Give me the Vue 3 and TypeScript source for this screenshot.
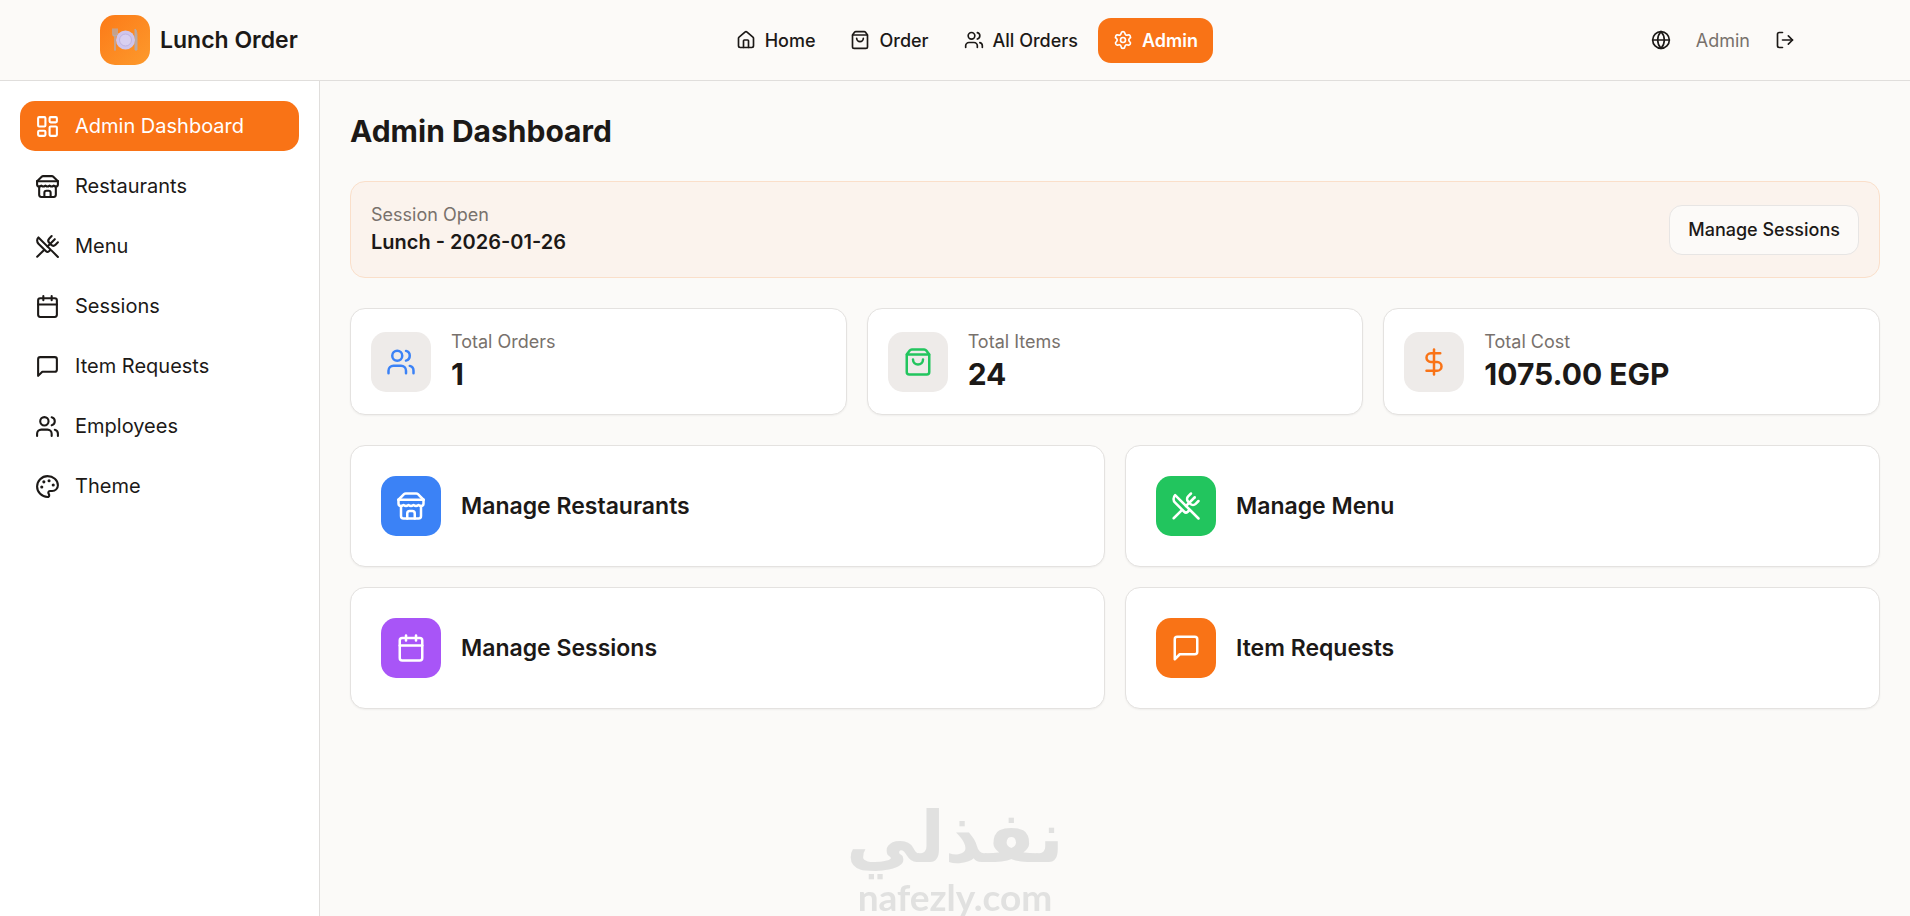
<script setup lang="ts">
import { h, type FunctionalComponent } from 'vue'

type IconName =
  | 'home' | 'bag' | 'users' | 'settings' | 'globe' | 'logout' | 'dashboard'
  | 'store' | 'utensils' | 'calendar' | 'message' | 'palette' | 'dollar'

const icons: Record<IconName, string[]> = {
  home: [
    'M15 21v-8a1 1 0 0 0-1-1h-4a1 1 0 0 0-1 1v8',
    'M3 10a2 2 0 0 1 .709-1.528l7-5.999a2 2 0 0 1 2.582 0l7 5.999A2 2 0 0 1 21 10v9a2 2 0 0 1-2 2H5a2 2 0 0 1-2-2z',
  ],
  bag: [
    'M16 10a4 4 0 0 1-8 0',
    'M3.103 6.034h17.794',
    'M3.4 5.467a2 2 0 0 0-.4 1.2V20a2 2 0 0 0 2 2h14a2 2 0 0 0 2-2V6.667a2 2 0 0 0-.4-1.2l-2-2.667A2 2 0 0 0 17 2H7a2 2 0 0 0-1.6.8z',
  ],
  users: [
    'M16 21v-2a4 4 0 0 0-4-4H6a4 4 0 0 0-4 4v2',
    'M16 3.128a4 4 0 0 1 0 7.744',
    'M22 21v-2a4 4 0 0 0-3-3.87',
    'M5 7a4 4 0 1 0 8 0a4 4 0 1 0-8 0',
  ],
  settings: [
    'M9.671 4.136a2.34 2.34 0 0 1 4.659 0 2.34 2.34 0 0 0 3.319 1.915 2.34 2.34 0 0 1 2.33 4.033 2.34 2.34 0 0 0 0 3.831 2.34 2.34 0 0 1-2.33 4.033 2.34 2.34 0 0 0-3.319 1.915 2.34 2.34 0 0 1-4.659 0 2.34 2.34 0 0 0-3.32-1.915 2.34 2.34 0 0 1-2.33-4.033 2.34 2.34 0 0 0 0-3.831A2.34 2.34 0 0 1 6.35 6.051a2.34 2.34 0 0 0 3.319-1.915',
    'M9 12a3 3 0 1 0 6 0a3 3 0 1 0-6 0',
  ],
  globe: [
    'M2 12a10 10 0 1 0 20 0a10 10 0 1 0-20 0',
    'M12 2a14.5 14.5 0 0 0 0 20 14.5 14.5 0 0 0 0-20',
    'M2 12h20',
  ],
  logout: ['m16 17 5-5-5-5', 'M21 12H9', 'M9 21H5a2 2 0 0 1-2-2V5a2 2 0 0 1 2-2h4'],
  dashboard: [
    'M4 3h5a1 1 0 0 1 1 1v7a1 1 0 0 1-1 1H4a1 1 0 0 1-1-1V4a1 1 0 0 1 1-1z',
    'M15 3h5a1 1 0 0 1 1 1v3a1 1 0 0 1-1 1h-5a1 1 0 0 1-1-1V4a1 1 0 0 1 1-1z',
    'M15 12h5a1 1 0 0 1 1 1v7a1 1 0 0 1-1 1h-5a1 1 0 0 1-1-1v-7a1 1 0 0 1 1-1z',
    'M4 16h5a1 1 0 0 1 1 1v3a1 1 0 0 1-1 1H4a1 1 0 0 1-1-1v-3a1 1 0 0 1 1-1z',
  ],
  store: [
    'm2 7 4.41-4.41A2 2 0 0 1 7.83 2h8.34a2 2 0 0 1 1.42.59L22 7',
    'M4 12v8a2 2 0 0 0 2 2h12a2 2 0 0 0 2-2v-8',
    'M15 22v-4a2 2 0 0 0-2-2h-2a2 2 0 0 0-2 2v4',
    'M2 7h20',
    'M22 7v3a2 2 0 0 1-2 2a2.7 2.7 0 0 1-1.59-.63.7.7 0 0 0-.82 0A2.7 2.7 0 0 1 16 12a2.7 2.7 0 0 1-1.59-.63.7.7 0 0 0-.82 0A2.7 2.7 0 0 1 12 12a2.7 2.7 0 0 1-1.59-.63.7.7 0 0 0-.82 0A2.7 2.7 0 0 1 8 12a2.7 2.7 0 0 1-1.59-.63.7.7 0 0 0-.82 0A2.7 2.7 0 0 1 4 12a2 2 0 0 1-2-2V7',
  ],
  utensils: [
    'm16 2-2.3 2.3a3 3 0 0 0 0 4.2l1.8 1.8a3 3 0 0 0 4.2 0L22 8',
    'M15 15 3.3 3.3a4.2 4.2 0 0 0 0 6l7.3 7.3c.7.7 2 .7 2.8 0L15 15Zm0 0 7 7',
    'm2.1 21.8 6.4-6.3',
    'm19 5-7 7',
  ],
  calendar: [
    'M8 2v4',
    'M16 2v4',
    'M5 4h14a2 2 0 0 1 2 2v14a2 2 0 0 1-2 2H5a2 2 0 0 1-2-2V6a2 2 0 0 1 2-2z',
    'M3 10h18',
  ],
  message: ['M21 15a2 2 0 0 1-2 2H7l-4 4V5a2 2 0 0 1 2-2h14a2 2 0 0 1 2 2z'],
  palette: [
    'M12 2C6.5 2 2 6.5 2 12s4.5 10 10 10c.926 0 1.648-.746 1.648-1.688 0-.437-.18-.835-.437-1.125-.29-.289-.438-.652-.438-1.125a1.64 1.64 0 0 1 1.668-1.668h1.996c3.051 0 5.555-2.503 5.555-5.554C21.965 6.012 17.461 2 12 2z',
    'M13 6.5a.5.5 0 1 0 1 0a.5.5 0 1 0-1 0',
    'M17 10.5a.5.5 0 1 0 1 0a.5.5 0 1 0-1 0',
    'M8 7.5a.5.5 0 1 0 1 0a.5.5 0 1 0-1 0',
    'M6 12.5a.5.5 0 1 0 1 0a.5.5 0 1 0-1 0',
  ],
  dollar: ['M12 2v20', 'M17 5H9.5a3.5 3.5 0 0 0 0 7h5a3.5 3.5 0 0 1 0 7H6'],
}

const Icon: FunctionalComponent<{ name: IconName }> = (props) =>
  h(
    'svg',
    {
      viewBox: '0 0 24 24',
      fill: 'none',
      stroke: 'currentColor',
      'stroke-width': 2,
      'stroke-linecap': 'round',
      'stroke-linejoin': 'round',
      'aria-hidden': 'true',
    },
    icons[props.name].map((d) => h('path', { d })),
  )
Icon.props = ['name']

interface LinkItem {
  label: string
  icon: IconName
  active?: boolean
}

const navLinks: LinkItem[] = [
  { label: 'Home', icon: 'home' },
  { label: 'Order', icon: 'bag' },
  { label: 'All Orders', icon: 'users' },
  { label: 'Admin', icon: 'settings', active: true },
]

const sideLinks: LinkItem[] = [
  { label: 'Admin Dashboard', icon: 'dashboard', active: true },
  { label: 'Restaurants', icon: 'store' },
  { label: 'Menu', icon: 'utensils' },
  { label: 'Sessions', icon: 'calendar' },
  { label: 'Item Requests', icon: 'message' },
  { label: 'Employees', icon: 'users' },
  { label: 'Theme', icon: 'palette' },
]

const stats: { label: string; value: string; icon: IconName; tone: string }[] = [
  { label: 'Total Orders', value: '1', icon: 'users', tone: 'ink-blue' },
  { label: 'Total Items', value: '24', icon: 'bag', tone: 'ink-green' },
  { label: 'Total Cost', value: '1075.00 EGP', icon: 'dollar', tone: 'ink-orange' },
]

const actions: { label: string; icon: IconName; tone: string }[] = [
  { label: 'Manage Restaurants', icon: 'store', tone: 'fill-blue' },
  { label: 'Manage Menu', icon: 'utensils', tone: 'fill-green' },
  { label: 'Manage Sessions', icon: 'calendar', tone: 'fill-purple' },
  { label: 'Item Requests', icon: 'message', tone: 'fill-orange' },
]
</script>

<template>
  <div class="app">
    <header class="topbar">
      <div class="topbar-inner">
        <a class="brand" href="#">
          <span class="brand-mark">
            <svg class="plate" viewBox="0 0 26 24" aria-hidden="true">
              <path d="M1 1v5q0 2 2 2t2-2V1M3 1v21" fill="none" stroke="#b8a9a6" stroke-width="1.6" stroke-linecap="round" />
              <path d="M23 1c2 1 2 5 2 10v11h-2z" fill="#b8a9a6" stroke="#b8a9a6" stroke-width="1" stroke-linejoin="round" />
              <circle cx="13.500" cy="12" r="9.500" fill="#cfc5ec" />
              <circle cx="13.500" cy="12" r="6" fill="#d8cff0" stroke="#bfb3e0" stroke-width="1" />
            </svg>
          </span>
          <span class="brand-name">Lunch Order</span>
        </a>
        <nav class="nav" aria-label="Main">
          <a v-for="link in navLinks" :key="link.label" href="#" class="nav-link" :class="{ active: link.active }">
            <Icon class="icon-sm" :name="link.icon" />
            <span>{{ link.label }}</span>
          </a>
        </nav>
        <div class="account">
          <button class="icon-button" type="button" aria-label="Change language">
            <Icon class="icon-sm" name="globe" />
          </button>
          <span class="user">Admin</span>
          <button class="icon-button" type="button" aria-label="Log out">
            <Icon class="icon-sm" name="logout" />
          </button>
        </div>
      </div>
    </header>

    <div class="body">
      <aside class="sidebar">
        <nav class="side-nav" aria-label="Admin sections">
          <a v-for="link in sideLinks" :key="link.label" href="#" class="side-link" :class="{ active: link.active }">
            <Icon class="icon-md" :name="link.icon" />
            <span>{{ link.label }}</span>
          </a>
        </nav>
      </aside>

      <main class="main">
        <h1 class="title">Admin Dashboard</h1>

        <section class="session">
          <div>
            <p class="label">Session Open</p>
            <p class="session-name">Lunch - 2026-01-26</p>
          </div>
          <button class="outline-button" type="button">Manage Sessions</button>
        </section>

        <section class="stats">
          <div v-for="stat in stats" :key="stat.label" class="card stat">
            <span class="tile muted" :class="stat.tone"><Icon class="icon-lg" :name="stat.icon" /></span>
            <div>
              <p class="label">{{ stat.label }}</p>
              <p class="value">{{ stat.value }}</p>
            </div>
          </div>
        </section>

        <section class="actions">
          <a v-for="action in actions" :key="action.label" href="#" class="card action">
            <span class="tile" :class="action.tone"><Icon class="icon-lg" :name="action.icon" /></span>
            <span class="action-name">{{ action.label }}</span>
          </a>
        </section>
      </main>
    </div>

    <div class="watermark">
      <span class="watermark-ar" lang="ar" dir="rtl">نفذلي</span>
      <span class="watermark-en">nafezly.com</span>
    </div>
  </div>
</template>

<style>
body {
  margin: 0;
  background: #fbfaf8;
}
</style>

<style scoped>
.app {
  display: flex;
  flex-direction: column;
  min-height: 100vh;
  color: #1c1917;
  font-family: Inter, 'Liberation Sans', sans-serif;
  font-size: 20px;
  line-height: 30px;
}

.app *,
.app {
  box-sizing: border-box;
}

a {
  color: inherit;
  text-decoration: none;
}

p,
h1 {
  margin: 0;
}

button {
  font: inherit;
  color: inherit;
  cursor: pointer;
}

svg {
  display: block;
  flex: none;
}

.icon-sm {
  width: 20px;
  height: 20px;
}

.icon-md {
  width: 25px;
  height: 25px;
}

.icon-lg {
  width: 30px;
  height: 30px;
}

.topbar {
  background: #fcfaf8;
  border-bottom: 1px solid #e0dedc;
}

.topbar-inner {
  display: flex;
  align-items: center;
  justify-content: space-between;
  max-width: 1750px;
  height: 80px;
  margin: 0 auto;
  padding: 0 20px;
}

.brand {
  display: flex;
  align-items: center;
  gap: 10px;
}

.brand-mark {
  display: flex;
  align-items: center;
  justify-content: center;
  width: 50px;
  height: 50px;
  border-radius: 15px;
  background: linear-gradient(135deg, #fc7a18, #fd9a2c);
}

.plate {
  width: 26px;
  height: 24px;
}

.brand-name {
  font-size: 23px;
  font-weight: 600;
}

.nav {
  display: flex;
  gap: 5px;
}

.nav-link {
  display: flex;
  align-items: center;
  gap: 9px;
  padding: 10px 15px;
  border-radius: 13px;
  font-size: 18px;
  font-weight: 500;
  line-height: 25px;
}

.nav-link.active {
  background: #f97316;
  color: #fff;
  font-weight: 600;
}

.account {
  display: flex;
  align-items: center;
  gap: 10px;
}

.icon-button {
  padding: 12px 15px;
  border: 0;
  border-radius: 13px;
  background: transparent;
}

.user,
.label {
  color: #78716c;
  font-size: 18px;
  line-height: 25px;
}

.body {
  display: flex;
  flex: 1;
}

.sidebar {
  flex: none;
  width: 320px;
  padding: 20px;
  border-right: 1px solid #e0dedc;
  background: #fff;
}

.side-nav {
  display: flex;
  flex-direction: column;
  gap: 10px;
}

.side-link {
  display: flex;
  align-items: center;
  gap: 15px;
  padding: 10px 15px;
  border-radius: 15px;
}

.side-link.active {
  background: #f97316;
  color: #fff;
}

.main {
  display: flex;
  flex: 1;
  flex-direction: column;
  gap: 30px;
  min-width: 0;
  padding: 30px;
}

.title {
  font-size: 30px;
  font-weight: 700;
  line-height: 40px;
}

.session {
  display: flex;
  align-items: center;
  justify-content: space-between;
  padding: 20px;
  border: 1px solid #fadfca;
  border-radius: 15px;
  background: #fbf3ed;
}

.session-name {
  font-weight: 600;
}

.outline-button {
  padding: 11px 18px;
  border: 1px solid #e7e5e4;
  border-radius: 13px;
  background: #fcfaf8;
  font-size: 18px;
  font-weight: 500;
  line-height: 26px;
}

.card {
  display: flex;
  align-items: center;
  gap: 20px;
  border: 1px solid #e4e2e0;
  border-radius: 15px;
  background: #fff;
  box-shadow: 0 1px 2px rgba(0, 0, 0, 0.05);
}

.stats {
  display: grid;
  grid-template-columns: repeat(3, 1fr);
  gap: 20px;
}

.stat {
  padding: 20px;
}

.tile {
  display: flex;
  flex: none;
  align-items: center;
  justify-content: center;
  width: 60px;
  height: 60px;
  border-radius: 15px;
  color: #fff;
}

.tile.muted {
  background: #eeebe9;
}

.tile.ink-blue {
  color: #3b82f6;
}

.tile.ink-green {
  color: #22c55e;
}

.tile.ink-orange {
  color: #f97316;
}

.fill-blue {
  background: #3b82f6;
}

.fill-green {
  background: #22c55e;
}

.fill-purple {
  background: #a855f7;
}

.fill-orange {
  background: #f97316;
}

.value {
  font-size: 30px;
  font-weight: 700;
  line-height: 40px;
}

.actions {
  display: grid;
  grid-template-columns: repeat(2, 1fr);
  gap: 20px;
}

.action {
  padding: 30px;
}

.action-name {
  font-size: 23px;
  font-weight: 600;
}

/* Floats over the bottom centre of the window */
.watermark {
  position: fixed;
  right: 0;
  bottom: 0;
  left: 0;
  display: flex;
  flex-direction: column;
  align-items: center;
  color: #e1e1e0;
  font-weight: 700;
  pointer-events: none;
}

.watermark-ar {
  font-family: 'DejaVu Sans', sans-serif;
  font-size: 71px;
  line-height: 80px;
}

.watermark-en {
  font-family: Lato, sans-serif;
  font-size: 37px;
  line-height: 38px;
}
</style>
